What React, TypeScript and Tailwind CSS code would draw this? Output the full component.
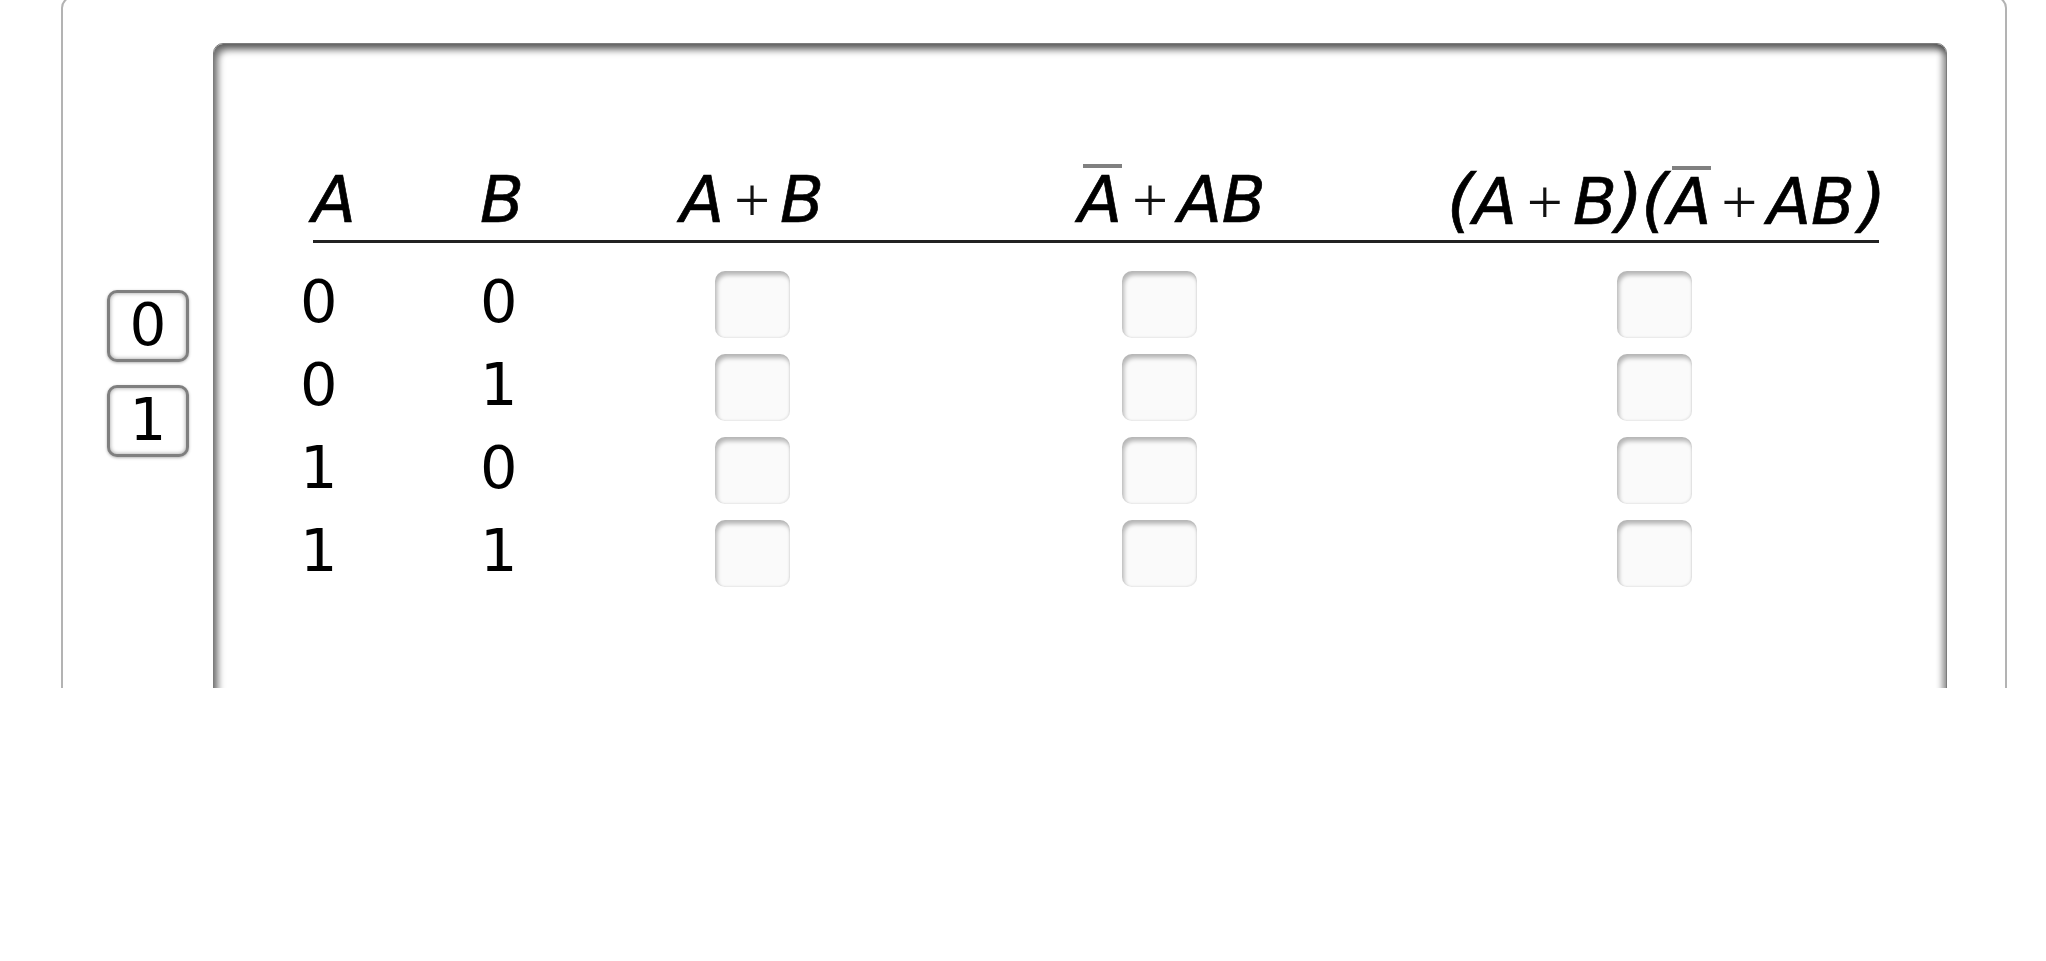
const rows = [
  ['0', '0'],
  ['0', '1'],
  ['1', '0'],
  ['1', '1'],
]

const cols = 'grid grid-cols-[180px_139px_266px_548px_443px]'

function Plus() {
  return (
    <span className="inline-block shrink-0 w-[56px] text-center font-['Liberation_Serif',serif] not-italic text-[64px] text-[#111] [-webkit-text-stroke:0px]">
      +
    </span>
  )
}

function Paren({ children }: { children: string }) {
  return <span className="inline-block shrink-0 mx-[-1px] text-[70px]">{children}</span>
}

// A with an overbar (negation)
function NotA() {
  return (
    <span className="relative inline-block shrink-0">
      <span className="absolute top-0 left-[5px] w-[39px] h-[4px] bg-[#808080]" />
      A
    </span>
  )
}

function AnswerBox() {
  return (
    <div className="w-[75px] h-[67px] rounded-[10px] bg-[#fafafa] shadow-[inset_2px_4px_4px_rgba(0,0,0,0.28),inset_-1px_-1px_2px_rgba(0,0,0,0.08)]" />
  )
}

function KeyButton({ label }: { label: string }) {
  return (
    <button className="w-[82px] h-[72px] rounded-[10px] border-[3px] border-[#7f7f7f] bg-white shadow-[inset_0_0_4px_rgba(0,0,0,0.4),0_1px_3px_rgba(0,0,0,0.3)] flex items-center justify-center text-[58px] leading-none text-black pb-[2px]">
      {label}
    </button>
  )
}

export default function App() {
  return (
    <div className="w-full h-[961px] bg-white font-['DejaVu_Sans',sans-serif] text-black">
      <div className="h-[688px] overflow-hidden pl-[61px]">
        {/* outer frame */}
        <div className="-mt-[4px] w-[1946px] h-[800px] border-2 border-[#b3b3b3] rounded-t-[12px] flex">
          {/* digit keys */}
          <div className="w-[150px] pt-[292px] pl-[44px] flex flex-col gap-[23px]">
            <KeyButton label="0" />
            <KeyButton label="1" />
          </div>

          {/* truth table panel */}
          <div className="w-[1734px] mt-[45px] h-[760px] rounded-t-[10px] border border-[#7c7c7c] bg-white pl-[86px] pt-[120px] shadow-[inset_4px_6px_7px_rgba(0,0,0,0.55),inset_-4px_0_6px_rgba(0,0,0,0.4)]">
            <div className={`${cols} h-[72px] leading-[72px] text-[64px] italic whitespace-nowrap [-webkit-text-stroke:0.7px_black]`}>
              <div className="pl-[12px]">A</div>
              <div>B</div>
              <div className="flex items-baseline justify-center">
                A<Plus />B
              </div>
              <div className="flex items-baseline justify-center pl-[26px]">
                <NotA />
                <Plus />
                AB
              </div>
              <div className="flex items-baseline justify-center pl-[24px]">
                <Paren>(</Paren>A<Plus />B<Paren>)</Paren>
                <Paren>(</Paren>
                <NotA />
                <Plus />
                AB<span className="w-[5px] shrink-0" />
                <Paren>)</Paren>
              </div>
            </div>
            <div className="ml-[13px] mt-[4px] w-[1566px] h-[3px] bg-[#222]" />

            <div className="mt-[20px]">
              {rows.map(([a, b], i) => (
                <div key={i} className={`${cols} h-[83px] items-center text-[59px] leading-none`}>
                  <div className="pb-[6px]">{a}</div>
                  <div className="pb-[6px]">{b}</div>
                  <div className="flex justify-center">
                    <AnswerBox />
                  </div>
                  <div className="flex justify-center">
                    <AnswerBox />
                  </div>
                  <div className="flex justify-center">
                    <AnswerBox />
                  </div>
                </div>
              ))}
            </div>
          </div>
        </div>
      </div>
    </div>
  )
}
